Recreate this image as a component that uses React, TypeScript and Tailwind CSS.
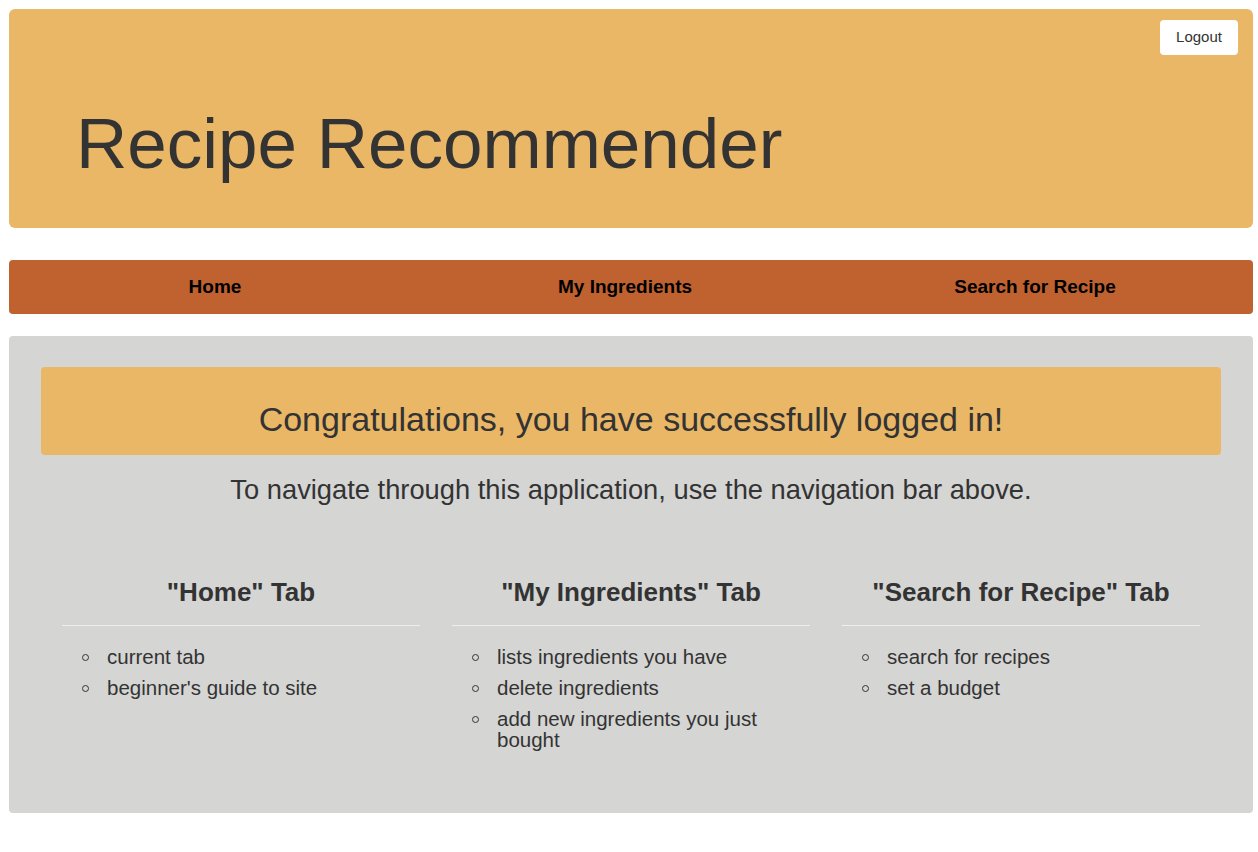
import React from 'react';

const tabs = [
  {
    title: '"Home" Tab',
    items: ['current tab', "beginner's guide to site"],
  },
  {
    title: '"My Ingredients" Tab',
    items: ['lists ingredients you have', 'delete ingredients', 'add new ingredients you just bought'],
  },
  {
    title: '"Search for Recipe" Tab',
    items: ['search for recipes', 'set a budget'],
  },
];

const navLinks = ['Home', 'My Ingredients', 'Search for Recipe'];

const App: React.FC = () => {
  return (
    <div className="min-h-screen bg-white pl-[9px] pr-[5px] pt-[9px] pb-10 text-[#333] font-['Liberation_Sans',Arial,sans-serif]">
      {/* Header */}
      <header className="relative rounded-md bg-[#E9B766] pl-[67px] pt-[96px] pb-[46px]">
        <button className="absolute top-[11px] right-[15px] h-[35px] w-[78px] rounded-[4px] bg-white text-[15px] text-[#333]">
          Logout
        </button>
        <h1 className="text-[71px] leading-[77px] font-normal">Recipe Recommender</h1>
      </header>

      {/* Nav */}
      <nav className="mt-[32px] rounded-[4px] bg-[#BF6230] pl-[1px] pr-[13px]">
        <ul className="grid grid-cols-3 h-[54px] items-center">
          {navLinks.map((link) => (
            <li key={link} className="text-center text-[19px] font-bold text-black">
              {link}
            </li>
          ))}
        </ul>
      </nav>

      {/* Main panel */}
      <main className="mt-[22px] rounded-[4px] bg-[#D5D5D3] px-[32px] pt-[31px] pb-[53px]">
        <div className="rounded-[4px] bg-[#E9B766] pt-[32px] pb-[16px] text-center">
          <h2 className="text-[34px] leading-[40px]">Congratulations, you have successfully logged in!</h2>
        </div>
        <p className="mt-[19px] text-center text-[27.3px] leading-[32px]">
          To navigate through this application, use the navigation bar above.
        </p>

        <div className="mt-[70px] grid grid-cols-3 gap-x-[32px] px-[21px]">
          {tabs.map((tab) => (
            <section key={tab.title}>
              <h3 className="border-b border-[#EEEEEE] pb-[17px] text-center text-[26px] leading-[32px] font-bold">
                {tab.title}
              </h3>
              <ul className="mt-[20px] pl-[20px] pr-[2px]">
                {tab.items.map((item) => (
                  <li key={item} className="mb-[10px] flex items-start text-[20.5px] leading-[21px]">
                    <span className="mt-[8px] mr-[18px] h-[7px] w-[7px] shrink-0 rounded-full border-[1.5px] border-[#333]" />
                    <span>{item}</span>
                  </li>
                ))}
              </ul>
            </section>
          ))}
        </div>
      </main>
    </div>
  );
};

export default App;
